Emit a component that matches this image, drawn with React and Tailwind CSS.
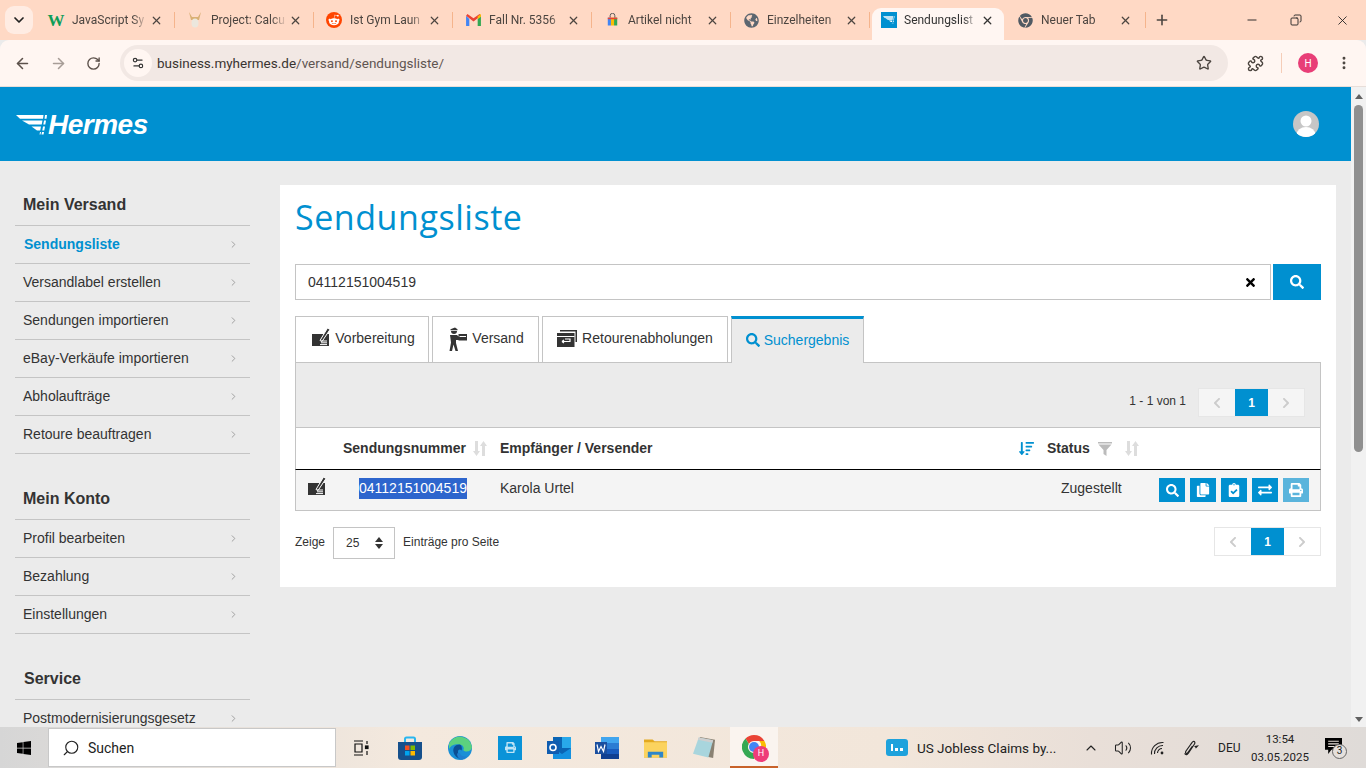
import { FaChrome, FaCopy, FaExchangeAlt, FaGlobeAmericas, FaPrint, FaRedditAlien, FaSearch, FaSortAmountDown, FaTimes, FaChevronLeft, FaChevronRight, FaWindows, FaClipboardCheck } from 'react-icons/fa'
import { ArrowLeft, ArrowRight, ChevronDown, ChevronRight, ChevronUp, EllipsisVertical, Minus, Plus, Puzzle, RotateCw, Search, Settings2, Star, Volume2, X, Copy } from 'lucide-react'

const uiFont = "font-['Roboto',sans-serif]"

function HermesMark({ className }) {
  return (
    <svg viewBox="0 0 32 20" className={className} fill="currentColor">
      <path d="M0 0h27.500l-.5 3.800H4z" />
      <path d="M6 5.500h20.500l-.8 4H13z" />
      <path d="M15.500 11.500h9.500l-.8 4H21z" />
      <path d="M24 17h1l-.5 2.500h-1z" />
      <path d="M29 0h2l-.5 3.800h-2z" />
      <path d="M28 5.500h2l-.7 4h-2z" />
      <path d="M27 11.500h2l-.7 4h-2z" />
      <path d="M26 17h2l-.5 2.500h-2z" />
    </svg>
  )
}

function GmailIcon() {
  return (
    <svg viewBox="0 0 16 14" className="w-[15px] h-[13px]">
      <path d="M0 2v11h3.500V5.500z" fill="#4285f4" />
      <path d="M16 2v11h-3.500V5.500z" fill="#34a853" />
      <path d="M0 2l8 6 8-6-1.500-2L8 4.500 1.500 0z" fill="#ea4335" />
      <path d="M12.500 2.500L16 0v3l-3.500 2.500z" fill="#fbbc04" />
    </svg>
  )
}

function BagIcon() {
  return (
    <svg viewBox="0 0 14 16" className="w-[11px] h-[14px]">
      <path d="M4 5V2.500a3 3 0 0 1 6 0V5" fill="none" stroke="#555" strokeWidth="1.200" />
      <rect x="1" y="5" width="4" height="10" fill="#4285f4" />
      <rect x="5" y="5" width="4" height="10" fill="#fbbc04" />
      <rect x="9" y="5" width="4" height="10" fill="#34a853" />
      <rect x="1" y="5" width="12" height="2" fill="#ea4335" />
    </svg>
  )
}

function ProjectIcon() {
  return (
    <svg viewBox="0 0 14 16" className="w-[14px] h-[16px]">
      <path d="M1 0l3 5h6l3-5-2 8H3z" fill="#d9b074" />
      <ellipse cx="7" cy="11" rx="3.500" ry="4.500" fill="#ece7dd" />
    </svg>
  )
}

function SortIcon({ className }) {
  return (
    <svg viewBox="0 0 14 15" className={className} fill="currentColor">
      <path d="M2 0h3v10h2l-3.500 5L0 10h2z" />
      <path d="M9 15h3V5h2L10.500 0 7 5h2z" />
    </svg>
  )
}

function FunnelIcon({ className }) {
  return (
    <svg viewBox="0 0 14 14" className={className} fill="currentColor">
      <rect x="0" y="0" width="14" height="1.500" />
      <path d="M0.500 2.500h13L8.500 8v6l-3-2V8z" />
    </svg>
  )
}

function PrepareIcon({ className }) {
  return (
    <svg viewBox="0 0 18 18" className={className}>
      <rect x="0" y="6" width="17" height="12" fill="#333" />
      <path d="M8 12.500L15.500 0 18 1.500 10 13.500z" fill="#333" stroke="#fff" strokeWidth="1" />
      <path d="M9 13h6M9 14.800h6M8 16.600h7" stroke="#fff" strokeWidth="1" />
    </svg>
  )
}

function CourierIcon({ className }) {
  return (
    <svg viewBox="0 0 18 24" className={className} fill="#333">
      <path d="M1.500 2.200L6 .5l2.500 1.700v1H1.500z" />
      <path d="M2 4h6a3 3 0 0 1-6 0z" />
      <path d="M1 8h7l1.500 1.500H10V13H7v3l2 8H6.500L4.500 17.500 3 24H.5L2 15.500z" />
      <rect x="9.500" y="7" width="8.500" height="6.500" />
      <rect x="10.500" y="9" width="6.500" height="1" fill="#fff" />
    </svg>
  )
}

function ReturnIcon({ className }) {
  return (
    <svg viewBox="0 0 20 17" className={className}>
      <path d="M3 0h17v12h-1.500V1.500H3z" fill="#333" />
      <rect x="0" y="3" width="17.500" height="14" fill="#333" />
      <rect x="0" y="6" width="17.500" height="1" fill="#fff" />
      <path d="M5 11.500h8V9h-5M5 11.500l2-1.500M5 11.500l2 1.500" stroke="#fff" strokeWidth="1.200" fill="none" />
    </svg>
  )
}

const tabs = [
  { title: 'JavaScript Sy', icon: <span className="font-['Liberation_Serif',serif] font-bold text-[17px] leading-none text-[#0f9d58]">W</span> },
  { title: 'Project: Calcu', icon: <ProjectIcon /> },
  { title: 'Ist Gym Laun', icon: <span className="w-4 h-4 rounded-full bg-[#ff4500] flex items-center justify-center"><FaRedditAlien className="text-white text-[12px]" /></span> },
  { title: 'Fall Nr. 5356', icon: <GmailIcon /> },
  { title: 'Artikel nicht', icon: <BagIcon /> },
  { title: 'Einzelheiten', icon: <FaGlobeAmericas className="text-[#5c6670] text-[15px]" /> },
  { title: 'Sendungslist', active: true, icon: <span className="w-4 h-4 bg-[#0090d0] flex items-center justify-center"><HermesMark className="w-3 h-2 text-white" /></span> },
  { title: 'Neuer Tab', icon: <FaChrome className="text-[#505a63] text-[15px]" />, plain: true },
]

function BrowserTab({ tab }) {
  if (tab.active) {
    return (
      <div className="w-[132px] ml-[2px] mr-px h-[32px] mt-[8px] pb-[8px] bg-[#fff6f2] rounded-t-[9px] flex items-center pl-[9px] pr-[10px] shrink-0">
        <span className="w-4 flex justify-center shrink-0">{tab.icon}</span>
        <span className="ml-[7px] w-[74px] whitespace-nowrap text-[12px] text-[#333] [mask-image:linear-gradient(to_right,#000_80%,transparent)]">{tab.title}</span>
        <X className="w-[13px] h-[13px] ml-auto text-[#333]" strokeWidth={2.4} />
      </div>
    )
  }
  return (
    <div className={`${tab.plain ? 'w-[141px] pr-[14px]' : 'w-[139px] pr-[12px]'} h-[32px] mt-[8px] pb-[8px] flex items-center pl-[12px] shrink-0 relative`}>
      <span className="w-4 flex justify-center shrink-0">{tab.icon}</span>
      <span className="ml-[8px] w-[76px] whitespace-nowrap text-[12px] text-[#4c4540] [mask-image:linear-gradient(to_right,#000_80%,transparent)]">{tab.title}</span>
      <X className="w-[13px] h-[13px] ml-auto text-[#4c4540]" strokeWidth={2.2} />
      <span className="absolute right-0 top-[4px] h-[16px] w-px bg-[#f5b48c]" />
    </div>
  )
}

function BrowserChrome() {
  return (
    <div className={`${uiFont} shrink-0`}>
      <div className="h-[40px] bg-[#ffd9c5] flex items-start">
        <div className="ml-[5px] mt-[6px] w-[28px] h-[28px] rounded-[9px] bg-[#ffece3] flex items-center justify-center shrink-0">
          <ChevronDown className="w-4 h-4 text-[#222]" strokeWidth={2.6} />
        </div>
        <div className="ml-[3px] flex items-start">
          {tabs.map((t) => (
            <BrowserTab key={t.title} tab={t} />
          ))}
        </div>
        <Plus className="w-4 h-4 mt-[12px] ml-[8px] text-[#4c4540]" strokeWidth={2.4} />
        <div className="ml-auto flex items-center h-[32px] mt-[4px] text-[#222]">
          <Minus className="w-[14px] h-[14px] mr-[31px]" strokeWidth={1.6} />
          <Copy className="w-[12px] h-[12px] mr-[33px] -scale-x-100" strokeWidth={1.8} />
          <X className="w-[15px] h-[15px] mr-[16px]" strokeWidth={1.4} />
        </div>
      </div>
      <div className="h-[46px] bg-[#fff6f2] rounded-t-[9px] flex items-center">
        <ArrowLeft className="w-[17px] h-[17px] ml-[14px] text-[#5c514b]" strokeWidth={2.2} />
        <ArrowRight className="w-[17px] h-[17px] ml-[19px] text-[#a79d97]" strokeWidth={2.2} />
        <RotateCw className="w-[15px] h-[15px] ml-[19px] text-[#5c514b]" strokeWidth={2.2} />
        <div className="ml-[19px] w-[1108px] h-[36px] rounded-[18px] bg-[#f2e8e4] flex items-center pl-[4px] pr-[16px]">
          <span className="w-[28px] h-[28px] rounded-full bg-[#fff6f2] flex items-center justify-center">
            <Settings2 className="w-[14px] h-[14px] text-[#333]" strokeWidth={2} />
          </span>
          <span className="ml-[5px] text-[13.500px] text-[#3a3431]">
            business.myhermes.de<span className="text-[#5f5551]">/versand/sendungsliste/</span>
          </span>
          <Star className="w-[16px] h-[16px] ml-auto text-[#4c4540]" strokeWidth={2} />
        </div>
        <Puzzle className="w-[17px] h-[17px] ml-[19px] text-[#4c4540]" strokeWidth={2} />
        <span className="ml-[17px] w-px h-[20px] bg-[#f5cdb8]" />
        <span className="ml-[16px] w-[20px] h-[20px] rounded-full bg-[#e83e77] text-white text-[10px] flex items-center justify-center">H</span>
        <EllipsisVertical className="w-[16px] h-[16px] ml-[18px] text-[#4c4540]" strokeWidth={2.4} />
      </div>
    </div>
  )
}

const sideNav = [
  { heading: 'Mein Versand', items: ['Sendungsliste', 'Versandlabel erstellen', 'Sendungen importieren', 'eBay-Verkäufe importieren', 'Abholaufträge', 'Retoure beauftragen'] },
  { heading: 'Mein Konto', items: ['Profil bearbeiten', 'Bezahlung', 'Einstellungen'] },
  { heading: 'Service', items: ['Postmodernisierungsgesetz'] },
]

function Sidebar() {
  return (
    <aside className="w-[235px] shrink-0 ml-[15px] mt-[24px]">
      {sideNav.map((group, i) => (
        <div key={group.heading} className={i > 0 ? 'mt-[25px]' : ''}>
          <h2 className={`h-[41px] flex items-center text-[16px] font-bold text-[#333] border-b border-[#c4c4c4] ${i === 2 ? 'pl-[9px]' : 'pl-[8px]'}`}>{group.heading}</h2>
          {group.items.map((item) => (
            <div key={item} className={`h-[38px] pr-[11px] flex items-center justify-between text-[14px] border-b border-[#c4c4c4] ${item === 'Sendungsliste' ? 'font-bold text-[#0090d0] pl-[9px]' : 'text-[#333] pl-[8px]'}`}>
              {item}
              <ChevronRight className="w-[11px] h-[11px] text-[#999]" strokeWidth={2} />
            </div>
          ))}
        </div>
      ))}
    </aside>
  )
}

function Pager({ className = '', plain }) {
  const side = `w-[36px] flex items-center justify-center ${plain ? 'bg-white' : 'bg-[#f5f5f5]'}`
  return (
    <div className={`flex h-[29px] border border-[#e6e6e6] ${className}`}>
      <span className={side}><FaChevronLeft className="text-[12px] text-[#ccc]" /></span>
      <span className="w-[33px] bg-[#0090d0] text-white font-bold text-[12px] flex items-center justify-center">1</span>
      <span className={side}><FaChevronRight className="text-[12px] text-[#ccc]" /></span>
    </div>
  )
}

function ContentTab({ children, width, active }) {
  if (active) {
    return (
      <div className={`${width} h-[47px] -mb-px pb-[2px] bg-[#ebebeb] border-x border-[#c4c4c4] border-t-[3px] border-t-[#0090d0] text-[#0090d0] flex items-center justify-center gap-[4px] text-[14px]`}>
        {children}
      </div>
    )
  }
  return (
    <div className={`${width} h-[47px] -mb-px pb-[2px] bg-white border border-[#c4c4c4] text-[#333] flex items-center justify-center gap-[5px] text-[14px]`}>
      {children}
    </div>
  )
}

function ActionButton({ children, light }) {
  return (
    <span className={`w-[26px] h-[24px] flex items-center justify-center text-white text-[14px] ${light ? 'bg-[#5ab4dc]' : 'bg-[#0090d0]'}`}>
      {children}
    </span>
  )
}

function ShipmentCard() {
  return (
    <section className="w-[1056px] h-[402px] shrink-0 ml-[30px] mt-[24px] bg-white px-[15px]">
      <h1 className="mt-[8px] h-[48px] font-['Open_Sans',sans-serif] font-medium text-[34px] leading-[48px] text-[#0090d0] tracking-[0.55px]">Sendungsliste</h1>
      <div className="mt-[23px] flex gap-[2px]">
        <div className="flex-1 h-[36px] border border-[#c4c4c4] flex items-center justify-between pl-[12px] pr-[13px] text-[14px] text-[#333]">
          04112151004519
          <FaTimes className="text-[13px] text-black" />
        </div>
        <button className="w-[48px] h-[36px] bg-[#0090d0] text-white flex items-center justify-center"><FaSearch className="text-[14px]" /></button>
      </div>
      <div className="mt-[16px] flex gap-[3px] relative z-10">
        <ContentTab width="w-[134px]"><PrepareIcon className="w-[18px] h-[18px] mb-[3px] ml-[3px]" />Vorbereitung</ContentTab>
        <ContentTab width="w-[107px]"><CourierIcon className="w-[18px] h-[24px] ml-[2px]" />Versand</ContentTab>
        <ContentTab width="w-[186px]"><ReturnIcon className="w-[20px] h-[17px]" />Retourenabholungen</ContentTab>
        <ContentTab width="w-[133px]" active><FaSearch className="text-[14px]" />Suchergebnis</ContentTab>
      </div>
      <div className="h-[65px] bg-[#ebebeb] border-x border-t border-[#c4c4c4] flex items-start justify-end pr-[15px] pt-[25px]">
        <span className="text-[12px] text-[#333] mr-[12px] mt-[4px]">1 - 1 von 1</span>
        <Pager />
      </div>
      <div className="border-x border-t border-[#c4c4c4] h-[42px] flex items-center text-[14px] font-bold text-[#333]">
        <span className="ml-[47px] w-[122px] whitespace-nowrap">Sendungsnummer</span>
        <SortIcon className="ml-[8px] w-[14px] h-[15px] text-[#ddd]" />
        <span className="ml-[13px] w-[519px] whitespace-nowrap">Empfänger / Versender</span>
        <FaSortAmountDown className="text-[15px] text-[#0090d0] shrink-0" />
        <span className="ml-[13px] w-[44px] whitespace-nowrap">Status</span>
        <FunnelIcon className="ml-[7px] w-[14px] h-[14px] text-[#bbb]" />
        <SortIcon className="ml-[13px] w-[14px] h-[15px] text-[#ddd]" />
      </div>
      <div className="h-[42px] border border-t-black border-[#c4c4c4] bg-[#f4f4f4] flex items-center text-[14px] text-[#333]">
        <PrepareIcon className="ml-[12px] w-[18px] h-[18px] mb-[8px] shrink-0" />
        <span className="ml-[33px] w-[108px] h-[21px] mb-[3px] bg-[#2d65cd] text-white leading-[21px] whitespace-nowrap shrink-0">04112151004519</span>
        <span className="ml-[33px] w-[561px] mb-[3px] shrink-0">Karola Urtel</span>
        <span className="w-[98px] mb-[3px] shrink-0">Zugestellt</span>
        <div className="flex gap-[5px]">
          <ActionButton><FaSearch className="text-[13px]" /></ActionButton>
          <ActionButton><FaCopy /></ActionButton>
          <ActionButton><FaClipboardCheck /></ActionButton>
          <ActionButton><FaExchangeAlt /></ActionButton>
          <ActionButton light><FaPrint /></ActionButton>
        </div>
      </div>
      <div className="mt-[16px] flex items-start text-[12px] text-[#333]">
        <span className="mt-[6px]">Zeige</span>
        <div className="ml-[8px] w-[62px] h-[32px] border border-[#c4c4c4] flex items-center justify-between pl-[12px] pr-[11px]">
          25
          <span className="flex flex-col text-[#333]">
            <svg viewBox="0 0 8 5" className="w-[8px] h-[5px] mb-[2px]" fill="currentColor"><path d="M4 0l4 5H0z" /></svg>
            <svg viewBox="0 0 8 5" className="w-[8px] h-[5px]" fill="currentColor"><path d="M4 5L0 0h8z" /></svg>
          </span>
        </div>
        <span className="ml-[8px] mt-[6px]">Einträge pro Seite</span>
        <Pager className="ml-auto" plain />
      </div>
    </section>
  )
}

function PageScrollbar() {
  return (
    <div className="w-[15px] bg-[#f1f1f1] shrink-0 flex flex-col items-center">
      <svg viewBox="0 0 8 5" className="w-[8px] h-[5px] mt-[7px] text-[#606060]" fill="currentColor"><path d="M4 0l4 5H0z" /></svg>
      <div className="w-[9px] h-[347px] mt-[6px] rounded-[5px] bg-[#8f8f8f]" />
      <svg viewBox="0 0 8 5" className="w-[8px] h-[5px] mt-auto mb-[5px] text-[#606060]" fill="currentColor"><path d="M4 5L0 0h8z" /></svg>
    </div>
  )
}

function StoreIcon() {
  return (
    <svg viewBox="0 0 24 24" className="w-[24px] h-[24px]">
      <path d="M7 7V3a1.500 1.500 0 0 1 1.500-1.500h7A1.500 1.500 0 0 1 17 3v4" fill="none" stroke="#29b6ef" strokeWidth="2" />
      <path d="M0 6h24v15a3 3 0 0 1-3 3H3a3 3 0 0 1-3-3z" fill="#16508c" />
      <rect x="7" y="9.500" width="4.500" height="4.500" fill="#f25022" />
      <rect x="12.500" y="9.500" width="4.500" height="4.500" fill="#7fba00" />
      <rect x="7" y="15" width="4.500" height="4.500" fill="#00a4ef" />
      <rect x="12.500" y="15" width="4.500" height="4.500" fill="#ffb900" />
    </svg>
  )
}

function EdgeIcon() {
  return (
    <svg viewBox="0 0 24 24" className="w-[24px] h-[24px]">
      <circle cx="12" cy="12" r="12" fill="#1a8fd6" />
      <path d="M1 8a12 12 0 0 1 22.800 2c.5 4-2.500 5.500-5 5.500-2 0-3.500-.6-3.500-1.500 1-1.500.5-5-3.500-5.500C8 8 3.500 8.500 1 13z" fill="#5cd17f" />
      <path d="M11.500 8.500c-4 0-7 3-6 7.500.8 4 5 8 10.500 7-3-1-6-3-6-7 0-3 2.500-3 3.500-1.500.9-1.600.2-6-2-6z" fill="#0c4f94" />
      <path d="M12 17c0 2 3 4 7 3.500-2 2-4 3-6 3-3-1-4-4-4-6z" fill="#1f7fd0" />
    </svg>
  )
}

function OutlookIcon() {
  return (
    <svg viewBox="0 0 24 24" className="w-[24px] h-[24px]">
      <rect x="6" y="1" width="18" height="22" fill="#0a64b4" />
      <rect x="15" y="1" width="9" height="11" fill="#28a8ea" />
      <path d="M6 12l9 6 9-6v11H6z" fill="#1490df" />
      <rect x="0" y="5" width="12" height="13" fill="#0f5cb0" />
      <circle cx="6" cy="11.500" r="3" fill="none" stroke="#fff" strokeWidth="1.600" />
    </svg>
  )
}

function WordIcon() {
  return (
    <svg viewBox="0 0 24 24" className="w-[24px] h-[24px]">
      <rect x="6" y="1" width="18" height="6" fill="#41a5ee" />
      <rect x="6" y="7" width="18" height="6" fill="#2b7cd3" />
      <rect x="6" y="13" width="18" height="5" fill="#185abd" />
      <rect x="6" y="18" width="18" height="5" fill="#103f91" />
      <rect x="0" y="6" width="12" height="12" fill="#1b4f9f" />
      <path d="M2 8.500l1.500 7 2.500-5 2.500 5 1.500-7" stroke="#fff" strokeWidth="1.200" fill="none" />
    </svg>
  )
}

function FolderIcon() {
  return (
    <svg viewBox="0 0 24 20" className="w-[23px] h-[20px]">
      <path d="M0 1h9l2 2h13v17H0z" fill="#e3a920" />
      <rect x="0" y="4" width="24" height="16" fill="#fbd35f" />
      <path d="M4 20v-6h16v6h-4v-3H8v3z" fill="#2e86c9" />
    </svg>
  )
}

function NotepadIcon() {
  return (
    <svg viewBox="0 0 24 24" className="w-[23px] h-[23px]">
      <path d="M7 1l16 3-2 19-5-1z" fill="#8a8172" />
      <path d="M6 1.500l15 3-5 18-16-4z" fill="#a8d5dd" />
      <path d="M6 1.500l15 3-.8 2.500-15-3z" fill="#cfcfcf" />
    </svg>
  )
}

function ChromeColor() {
  return (
    <span className="relative w-[24px] h-[24px]">
      <svg viewBox="0 0 24 24" className="w-[24px] h-[24px]">
        <path d="M12 0a12 12 0 0 1 10.400 6H12a6 6 0 0 0-5.200 3L3.500 3.500A12 12 0 0 1 12 0z" fill="#ea4335" />
        <path d="M22.400 6A12 12 0 0 1 12 24l5.200-9a6 6 0 0 0 0-9z" fill="#fbbc04" />
        <path d="M12 24A12 12 0 0 1 3.500 3.500L6.800 9a6 6 0 0 0 5.200 9z" fill="#34a853" />
        <circle cx="12" cy="12" r="5" fill="#4285f4" />
      </svg>
      <span className="absolute -right-[3px] -bottom-[3px] w-[16px] h-[16px] rounded-full bg-[#ee3c79] text-white text-[9px] flex items-center justify-center">H</span>
    </span>
  )
}

function Taskbar() {
  return (
    <footer className={`${uiFont} h-[41px] shrink-0 flex items-center bg-[linear-gradient(to_right,#d6d6d6_0%,#f4e9de_30%,#f2e6da_65%,#e9dfd8_80%,#dfdbd8_100%)] text-[#222]`}>
      <span className="w-[48px] flex justify-center shrink-0"><FaWindows className="text-[16px] text-black" /></span>
      <div className="w-[288px] h-[39px] shrink-0 bg-white border border-[#c8c8c8] flex items-center pl-[13px] text-[14px]">
        <Search className="w-[18px] h-[18px] -scale-x-100" strokeWidth={1.5} />
        <span className="ml-[8px] mt-px">Suchen</span>
      </div>
      <div className="flex items-center ml-px shrink-0">
        <span className="w-[48px] flex justify-center">
          <svg viewBox="0 0 16 16" className="w-[16px] h-[16px]" fill="none" stroke="#111" strokeWidth="1.200">
            <path d="M1 1h9M1 15h9M2 4h7v8H2z" />
            <rect x="12.500" y="6" width="2.500" height="2.500" fill="#111" />
            <path d="M14 1v3M14 11v4" />
          </svg>
        </span>
        <span className="w-[50px] flex justify-center"><StoreIcon /></span>
        <span className="w-[50px] flex justify-center"><EdgeIcon /></span>
        <span className="w-[50px] flex justify-center">
          <span className="w-[24px] h-[24px] bg-[#0a93d8] flex items-center justify-center"><FaPrint className="text-[11px] text-[#bfe4f5]" /></span>
        </span>
        <span className="w-[48px] flex justify-center"><OutlookIcon /></span>
        <span className="w-[48px] flex justify-center"><WordIcon /></span>
        <span className="w-[48px] flex justify-center"><FolderIcon /></span>
        <span className="w-[50px] flex justify-center"><NotepadIcon /></span>
        <span className="ml-px w-[48px] h-[41px] bg-[#faf4ef] border-b-[2px] border-[#c8622a] flex items-center justify-center"><ChromeColor /></span>
      </div>
      <div className="ml-[108px] w-[22px] h-[17px] rounded-[3px] bg-[#1ea2dc] flex items-center justify-center gap-[2px] shrink-0">
        <i className="w-[2px] h-[7px] bg-white" /><i className="w-[3px] h-[3px] mt-[4px] bg-white" /><i className="w-[3px] h-[3px] mt-[4px] bg-white" />
      </div>
      <span className="ml-[9px] mt-px w-[139px] shrink-0 text-[13.500px] whitespace-nowrap">US Jobless Claims by...</span>
      <ChevronUp className="ml-[27px] w-[16px] h-[16px] shrink-0" strokeWidth={1.6} />
      <Volume2 className="ml-[15px] w-[18px] h-[18px] shrink-0" strokeWidth={1.4} />
      <svg viewBox="0 0 16 16" className="ml-[17px] w-[16px] h-[16px] shrink-0" fill="none" stroke="#222" strokeWidth="1.100">
        <circle cx="13" cy="13" r="1.400" fill="#222" stroke="none" />
        <path d="M8.500 13A4.500 4.500 0 0 1 13 8.500M5.500 14A8 8 0 0 1 14 5.500M2.500 14.500A11 11 0 0 1 14.500 2.500" />
      </svg>
      <svg viewBox="0 0 16 16" className="ml-[18px] w-[16px] h-[16px] shrink-0" fill="none" stroke="#222" strokeWidth="1.200">
        <path d="M1.500 13.500c1.500 2 3 1 4-.5l6-9c1-1.500 0-3-1.300-2.500-1 .4-1.500 1.500-2.200 2.500L3 11c-.8 1.200-.5 2.500.5 2.500s1.500-1 2.500-2.500l3.500-5" />
        <path d="M11.500 6.500l3-.5-2 2" />
      </svg>
      <span className="ml-[19px] w-[22px] text-[12px] shrink-0 whitespace-nowrap">DEU</span>
      <div className="ml-[13px] w-[54px] shrink-0 flex flex-col items-center text-[11.500px] leading-[18px] whitespace-nowrap">
        <span>13:54</span>
        <span>03.05.2025</span>
      </div>
      <span className="relative ml-[18px] w-[24px] h-[24px] shrink-0">
        <svg viewBox="0 0 16 15" className="absolute left-0 top-[2px] w-[17px] h-[16px]">
          <path d="M0 0h16v11H6l-3 4v-4H0z" fill="#000" />
          <path d="M3 3h10M3 5.500h10M3 8h6" stroke="#e8e0d8" strokeWidth="1" />
        </svg>
        <span className="absolute left-[7px] top-[8px] w-[15px] h-[15px] rounded-full border border-[#666] bg-[#e5e0dc] text-[10px] leading-none flex items-center justify-center">3</span>
      </span>
    </footer>
  )
}

export default function App() {
  return (
    <div className="w-[1366px] h-[768px] flex flex-col overflow-hidden bg-[#ebebeb] font-['Liberation_Sans',Arial,sans-serif]">
      <BrowserChrome />
      <div className="h-px bg-[#e8ded9] shrink-0" />
      <div className="flex-1 min-h-0 flex">
        <div className="flex-1 min-w-0 overflow-hidden">
          <header className="h-[74px] bg-[#0090d0] flex items-center justify-between pl-[16px] pr-[32px]">
            <div className="flex items-center text-white pt-px">
              <HermesMark className="w-[32px] h-[20px]" />
              <span className="font-bold italic text-[28px] leading-none tracking-[-0.5px]">Hermes</span>
            </div>
            <span className="w-[26px] h-[26px] rounded-full bg-[#c6c6c6] overflow-hidden">
              <svg viewBox="0 0 26 26" className="w-[26px] h-[26px]" fill="#fff">
                <circle cx="13" cy="10" r="5.500" />
                <ellipse cx="13" cy="24" rx="9.500" ry="8" />
              </svg>
            </span>
          </header>
          <div className="flex items-start">
            <Sidebar />
            <ShipmentCard />
          </div>
        </div>
        <PageScrollbar />
      </div>
      <Taskbar />
    </div>
  )
}
